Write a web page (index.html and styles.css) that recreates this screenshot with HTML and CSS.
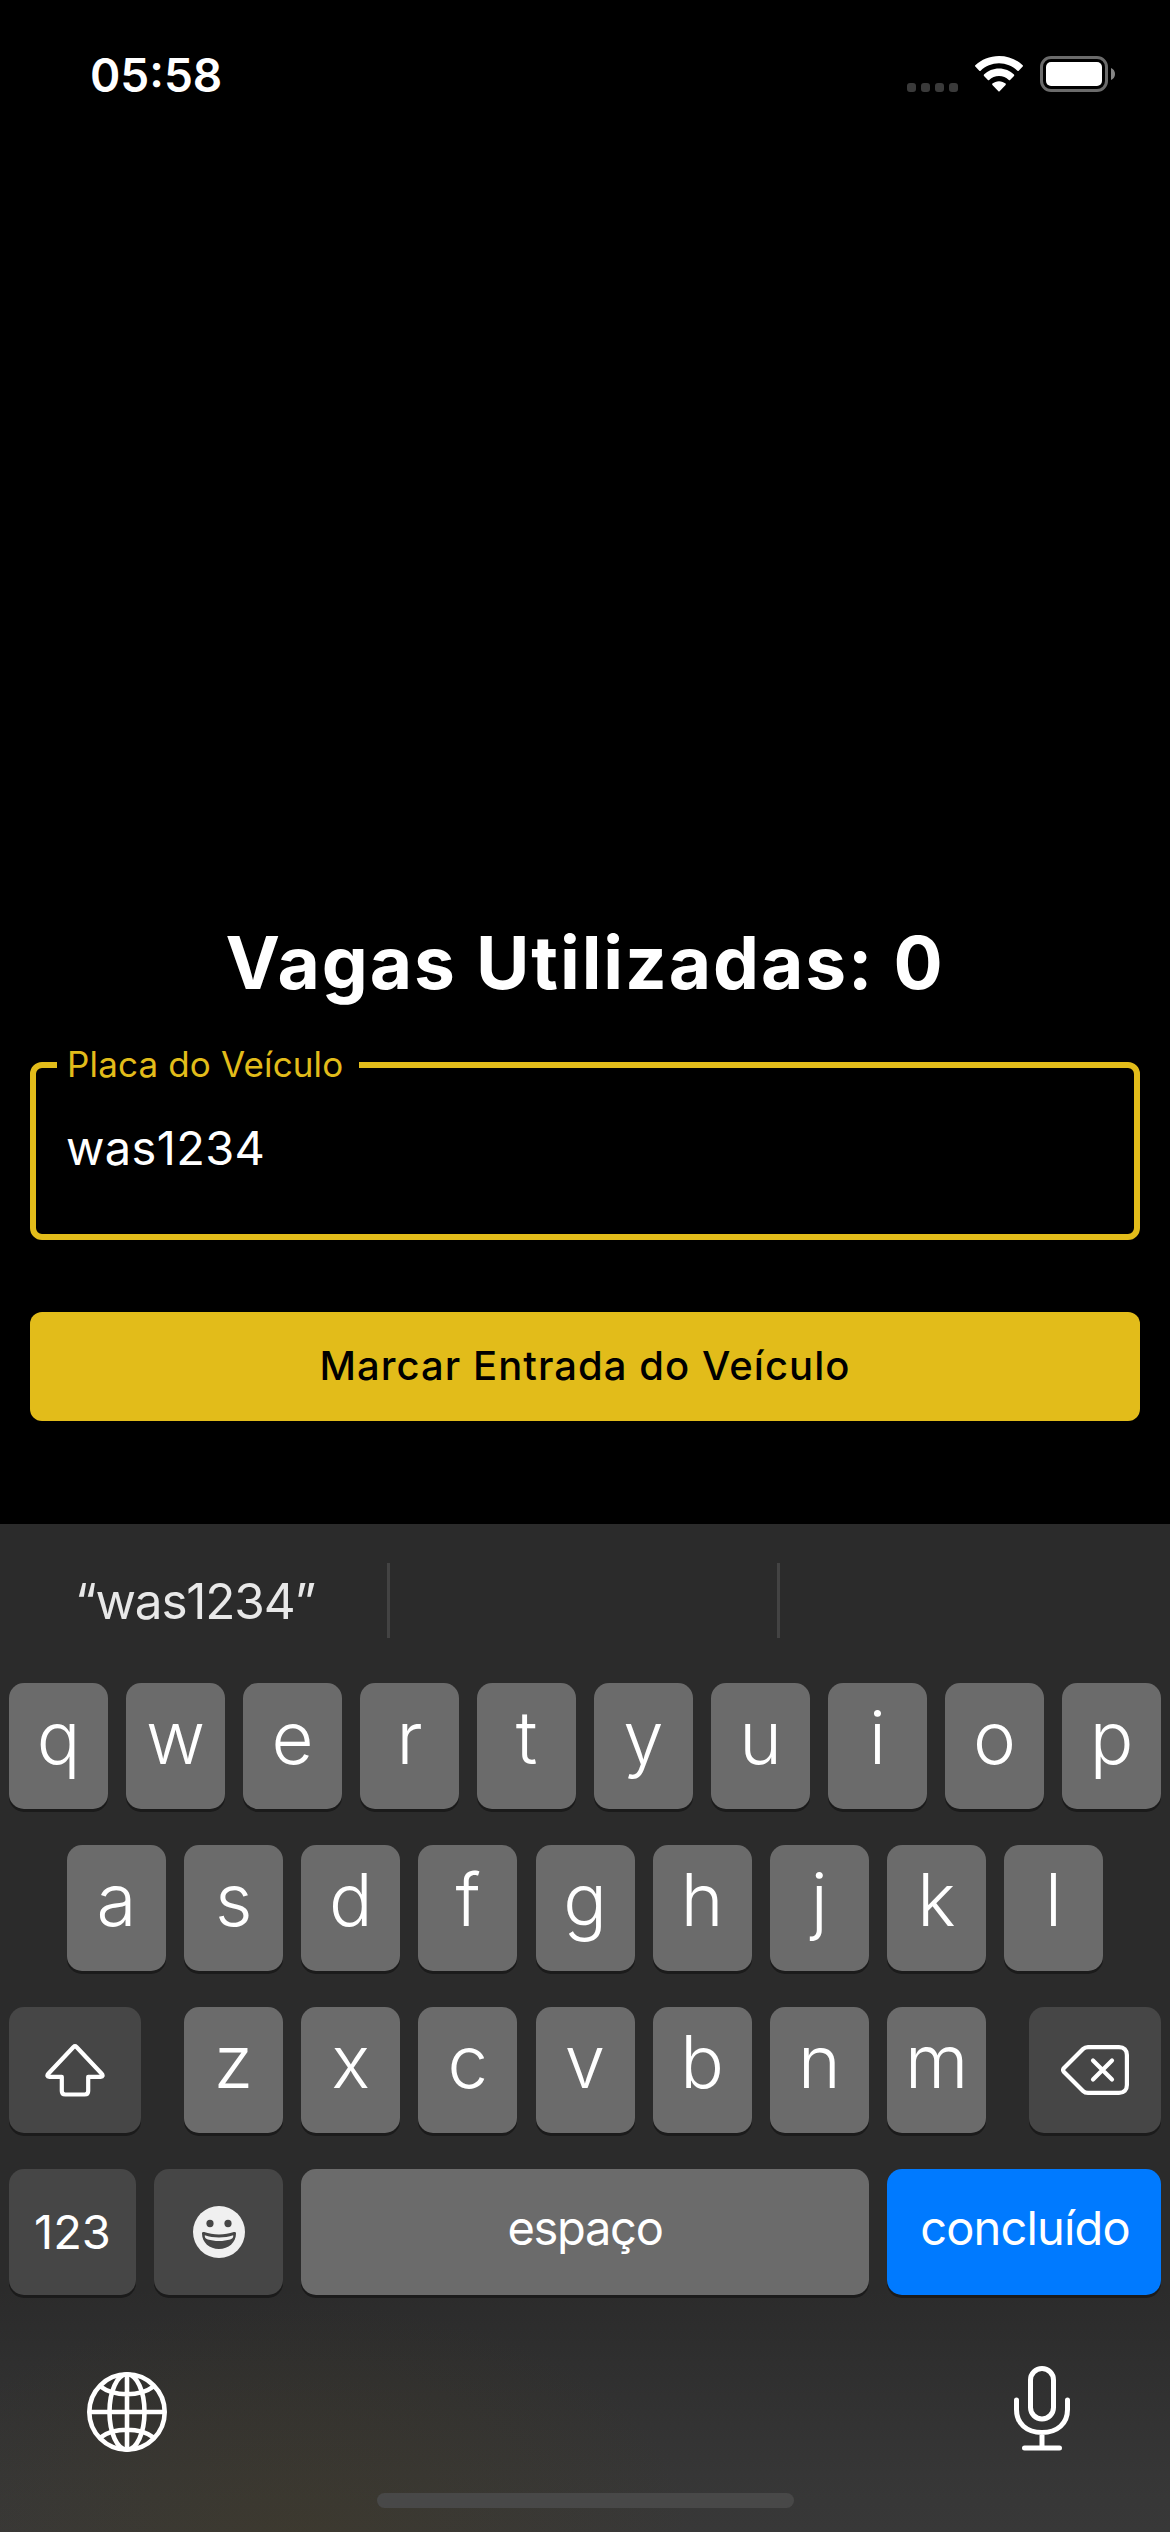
FILE: index.html
```html
<!DOCTYPE html>
<html lang="pt-BR">
<head>
<meta charset="utf-8">
<title>Vagas</title>
<link rel="stylesheet" href="styles.css">
</head>
<body>
<div class="screen">
  <header class="status">
    <span class="time">05:58</span>
    <div class="indicators">
      <div class="dots"><i></i><i></i><i></i><i></i></div>
      <svg class="wifi" width="48" height="36" viewBox="0 0 48 36">
        <path d="M24 0C14.800 0 6.400 3.500.3 9.300c-.4.400-.4.900 0 1.300l4 4.100c.4.400.9.400 1.300 0C10.500 10.100 17 7.300 24 7.300s13.500 2.800 18.400 7.400c.4.400.9.400 1.300 0l4-4.100c.4-.4.4-.9 0-1.300C41.600 3.500 33.200 0 24 0z"/>
        <path d="M24 12.600c-5.800 0-11.100 2.300-15 6-.4.400-.4.900 0 1.300l3.900 4c.4.400.9.400 1.300 0 2.600-2.400 6-3.900 9.800-3.900s7.200 1.500 9.800 3.900c.4.400.9.400 1.300 0l3.900-4c.4-.4.4-.9 0-1.300-3.900-3.700-9.200-6-15-6z"/>
        <path d="M24 25.200c-2.500 0-4.800.9-6.600 2.400-.4.300-.4.900 0 1.300l6 6.300c.3.400.9.400 1.200 0l6-6.300c.4-.4.4-1 0-1.300-1.800-1.500-4.100-2.400-6.600-2.400z"/>
      </svg>
      <svg class="battery" width="76" height="36" viewBox="0 0 76 36">
        <rect x="1.500" y="1.500" width="65" height="33" rx="9.500" fill="none" stroke="#6b6b6b" stroke-width="3"/>
        <rect x="6" y="6" width="56" height="24" rx="5" fill="#fff"/>
        <path d="M71 12c2.500 1 4 3.300 4 6s-1.500 5-4 6z" fill="#858585"/>
      </svg>
    </div>
  </header>

  <main class="content">
    <h1 class="title">Vagas Utilizadas: 0</h1>
    <fieldset class="field">
      <legend class="field-label">Placa do Veículo</legend>
      <div class="field-value">was1234</div>
    </fieldset>
    <button class="submit" type="button">Marcar Entrada do Veículo</button>
  </main>

  <section class="keyboard">
    <div class="suggestions">
      <span class="suggestion">“was1234”</span>
      <span class="suggestion"></span>
      <span class="suggestion"></span>
    </div>
    <div class="rows">
      <div class="row">
        <span class="key">q</span><span class="key">w</span><span class="key">e</span><span class="key">r</span><span class="key">t</span><span class="key">y</span><span class="key">u</span><span class="key">i</span><span class="key">o</span><span class="key">p</span>
      </div>
      <div class="row row-middle">
        <span class="key">a</span><span class="key">s</span><span class="key">d</span><span class="key">f</span><span class="key">g</span><span class="key">h</span><span class="key">j</span><span class="key">k</span><span class="key">l</span>
      </div>
      <div class="row row-shift">
        <span class="key key-dark key-side">
          <svg width="60" height="54" viewBox="0 0 60 54" fill="none" stroke="#fff" stroke-width="4.200" stroke-linejoin="round">
            <path d="M28.500 4 3.500 30.500c-1.800 2-1.300 3.300.8 3.300H16.800V48c0 2.500 1 3.500 3.500 3.500h19.400c2.500 0 3.500-1 3.500-3.500V33.800h12.500c2.100 0 2.600-1.300.8-3.300L31.500 4q-1.500-1.500-3 0z"/>
          </svg>
        </span>
        <div class="letters">
          <span class="key">z</span><span class="key">x</span><span class="key">c</span><span class="key">v</span><span class="key">b</span><span class="key">n</span><span class="key">m</span>
        </div>
        <span class="key key-dark key-side">
          <svg width="68" height="50" viewBox="0 0 68 50" fill="none" stroke="#fff" stroke-width="4.200" stroke-linecap="round" stroke-linejoin="round">
            <path d="M27 2.100H58C63 2.100 65.900 5 65.900 10V40C65.900 45 63 47.900 58 47.900H27Q24 47.900 22 45.900L3 27Q1.200 25 3 23L22 4.100Q24 2.100 27 2.100z"/>
            <path d="M32 15.500 51 34.500M51 15.500 32 34.500"/>
          </svg>
        </span>
      </div>
      <div class="row row-bottom">
        <span class="key key-dark key-numbers">123</span>
        <span class="key key-dark key-emoji">
          <svg width="52" height="52" viewBox="0 0 52 52">
            <circle cx="26" cy="26" r="26" fill="#f0f0f0"/>
            <ellipse cx="17" cy="17.500" rx="3.600" ry="3.700" fill="#464646"/>
            <ellipse cx="35" cy="17.500" rx="3.600" ry="3.700" fill="#464646"/>
            <path d="M9 27.500c0-1.400.9-1.800 2.200-1.400C15.600 27.700 20.600 28.600 26 28.600s10.400-.9 14.800-2.500c1.300-.4 2.200 0 2.200 1.400C43 36.500 35.500 43 26 43S9 36.500 9 27.500z" fill="#464646"/>
            <path d="M11.800 29.300C16 30.900 21 31.500 26 31.500s10-.6 14.200-2.200c.3 2.400-.7 3.500-3 4.100-3.200.9-7 1.500-11.200 1.500s-8-.6-11.200-1.500c-2.300-.6-3.300-1.700-3-4.100z" fill="#f0f0f0"/>
          </svg>
        </span>
        <span class="key key-space">espaço</span>
        <span class="key key-done">concluído</span>
      </div>
    </div>
    <footer class="dock">
      <svg class="globe" width="80" height="80" viewBox="0 0 80 80" fill="none" stroke="#fff" stroke-width="4.600">
        <circle cx="40" cy="40" r="37.700"/>
        <ellipse cx="40" cy="40" rx="17.500" ry="37.700"/>
        <path d="M40 2v76M2 40h76M13.500 14.500C20 19.500 29.500 22.200 40 22.200s20-2.700 26.500-7.700M13.500 65.500C20 60.500 29.500 57.800 40 57.800s20 2.700 26.500 7.700"/>
      </svg>
      <svg class="mic" width="56" height="85" viewBox="0 0 56 85" fill="none" stroke="#fff" stroke-width="5" stroke-linecap="round">
        <rect x="16.500" y="2.500" width="23" height="50.500" rx="11.500"/>
        <path d="M2.500 34v9.500C2.500 57.500 12.500 66.500 28 66.500s25.500-9 25.500-23V34M28 67v15M10.500 82h35"/>
      </svg>
    </footer>
    <div class="home"></div>
  </section>
</div>
</body>
</html>
```
FILE: styles.css
```css
* {
  box-sizing: border-box;
}

body {
  margin: 0;
  background: #000;
  font-family: Inter, "Liberation Sans", sans-serif;
  color: #fff;
}

.screen {
  width: 1170px;
  height: 2532px;
  display: flex;
  flex-direction: column;
  overflow: hidden;
}

/* Status bar */
.status {
  height: 150px;
  padding: 0 54px 0 90px;
  display: flex;
  justify-content: space-between;
  align-items: center;
}

.time {
  font-size: 46px;
  font-weight: 600;
}

.indicators {
  display: flex;
  align-items: center;
  height: 36px;
  margin-bottom: 2px;
}

.dots {
  display: flex;
  gap: 5px;
  align-self: flex-end;
}

.dots i {
  width: 9px;
  height: 9px;
  border-radius: 3px;
  background: #3a3a3a;
}

.wifi {
  margin-left: 17px;
  fill: #fff;
}

.battery {
  margin-left: 17px;
}

/* Form */
.content {
  flex: 1;
  display: flex;
  flex-direction: column;
  justify-content: flex-end;
  padding: 0 30px 103px;
}

.title {
  margin: 0 0 36px;
  font-size: 73px;
  line-height: 90px;
  font-weight: 700;
  letter-spacing: 1.900px;
  text-align: center;
  white-space: nowrap;
}

.field {
  height: 196px;
  margin: 0;
  padding: 0 21px;
  border: 6px solid #e2bc1a;
  border-radius: 12px;
}

.field-label {
  padding: 0 16px 2px 10px;
  font-size: 35px;
  line-height: 40px;
  letter-spacing: 0.150px;
  color: #e2bc1a;
}

.field-value {
  margin: 32px 0 0 9px;
  font-size: 47px;
  line-height: 60px;
  letter-spacing: 0.350px;
}

.submit {
  height: 109px;
  margin-top: 72px;
  padding: 0 0 2px;
  border: 0;
  border-radius: 12px;
  background: #e2bc1a;
  color: #000;
  font: 450 40px Inter, "Liberation Sans", sans-serif;
  letter-spacing: 1.050px;
}

/* Keyboard */
.keyboard {
  height: 1008px;
  display: flex;
  flex-direction: column;
  background:
    radial-gradient(ellipse 400px 230px at 295px 100%, rgba(72, 60, 25, 0.28), transparent),
    linear-gradient(#2b2b2b 76%, #303030 85%, #363636 94%, #383838);
}

.suggestions {
  height: 153px;
  display: grid;
  grid-template-columns: 390px 390px 390px;
  align-items: center;
}

.suggestion {
  height: 75px;
  padding-left: 3px;
  font-size: 49.500px;
  line-height: 76px;
  letter-spacing: -1.200px;
  text-align: center;
  color: #e8e8e8;
}

.suggestion:not(:last-child) {
  border-right: 3px solid #434343;
}

.rows {
  display: flex;
  flex-direction: column;
  gap: 36px;
  padding: 6px 9px 0;
}

.row {
  display: flex;
  justify-content: space-between;
}

.row-middle {
  padding: 0 58px;
}

.letters {
  display: flex;
  gap: 18.200px;
}

.key {
  width: 99px;
  height: 126px;
  border-radius: 15px;
  background: #6b6b6b;
  box-shadow: 0 3px 0 #1b1b1b;
  font-size: 72.500px;
  line-height: 110px;
  font-weight: 350;
  text-align: center;
}

.key-dark {
  display: flex;
  align-items: center;
  justify-content: center;
  background: #464646;
}

.key-side {
  width: 132px;
}

.key-numbers,
.key-space,
.key-done {
  font-size: 47px;
  line-height: 118px;
  font-weight: 400;
}

.key-numbers {
  width: 127px;
}

.key-emoji {
  width: 129px;
}

.key-space {
  width: 568px;
  letter-spacing: -1.300px;
}

.key-done {
  width: 274px;
  padding-left: 2px;
  background: #007aff;
  letter-spacing: -0.850px;
}

.dock {
  flex: 1;
  display: flex;
  justify-content: space-between;
  align-items: flex-start;
  padding: 71px 100px 0 87px;
}

.globe {
  margin-top: 6px;
}

.home {
  width: 417px;
  height: 15px;
  margin: 0 auto 24px;
  border-radius: 8px;
  background: #484848;
}
```
